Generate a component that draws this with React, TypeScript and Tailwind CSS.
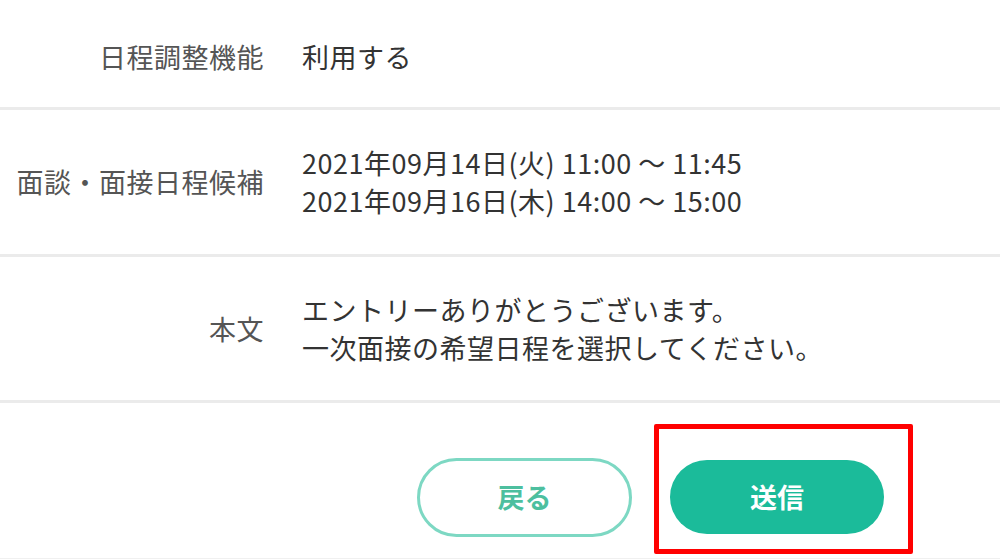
import React from "react";

const font = { fontFamily: '"Noto Sans CJK JP", "Noto Sans", sans-serif' };

function Row({ label, lines, top = 34, bottom = 34 }: { label: string; lines: string[]; top?: number; bottom?: number }) {
  return (
    <div
      className="flex items-center border-b-[3px] border-[#ebebeb]"
      style={{ paddingTop: top, paddingBottom: bottom }}
    >
      <div className="w-[264px] shrink-0 text-right text-[27px] leading-[38px] tracking-[0.5px] text-[#555555]">{label}</div>
      <div className="ml-[38px] text-[27px] leading-[38px] tracking-[0.5px] text-[#333333]">
        {lines.map((l, i) => (
          <div key={i}>{l}</div>
        ))}
      </div>
    </div>
  );
}

export default function App() {
  return (
    <div className="w-[1000px] h-[560px] bg-white overflow-hidden" style={font}>
      <Row label="日程調整機能" lines={["利用する"]} top={38} bottom={31} />
      <Row
        label="面談・面接日程候補"
        lines={["2021年09月14日(火) 11:00 ～ 11:45", "2021年09月16日(木) 14:00 ～ 15:00"]}
      />
      <Row label="本文" lines={["エントリーありがとうございます。", "一次面接の希望日程を選択してください。"]} top={34} bottom={33} />
      <div className="flex items-start pl-[417px] pt-[21px]">
        <button className="mt-[34px] w-[215px] h-[79px] rounded-full border-[3px] border-[#7dd8c3] bg-white text-[27px] font-bold text-[#4dbf9f]">
          戻る
        </button>
        <div className="ml-[22px] rounded-[2px] border-[5px] border-[#ff0000] pl-[11px] pr-[24px] pt-[31px] pb-[15px]">
          <button className="w-[214px] h-[74px] rounded-full bg-[#1bbb9a] text-[27px] font-bold text-white">
            送信
          </button>
        </div>
      </div>
      <div className="mt-[4px] h-px bg-[#f0f0f0]" />
    </div>
  );
}
